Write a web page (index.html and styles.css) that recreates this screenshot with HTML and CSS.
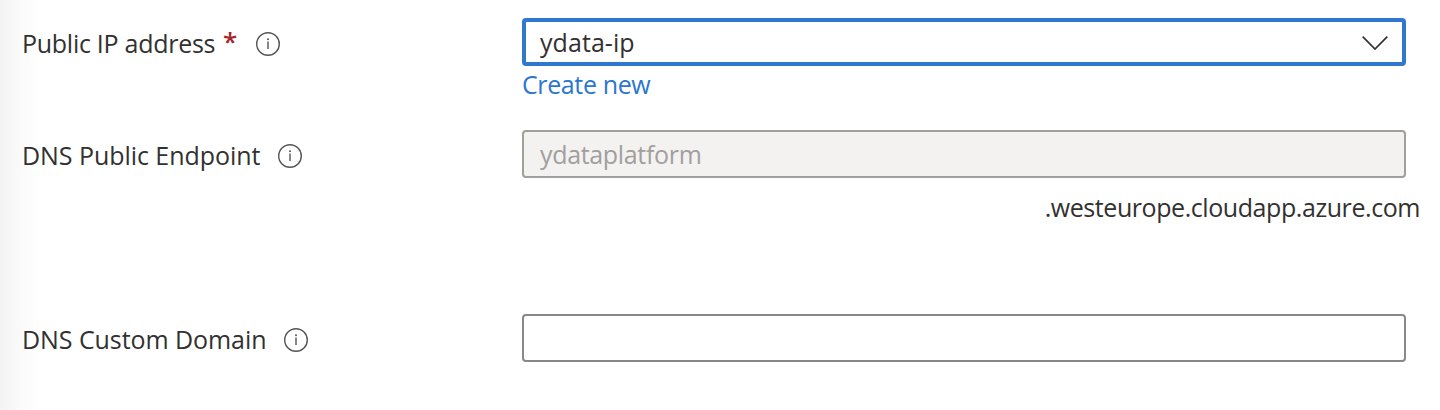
FILE: index.html
```html
<!DOCTYPE html>
<html lang="en">
<head>
<meta charset="utf-8">
<title>Networking</title>
<link rel="stylesheet" href="styles.css">
</head>
<body>
<svg class="defs" width="0" height="0"><symbol id="info" viewBox="0 0 24 24"><circle cx="12" cy="12" r="11.3" fill="none" stroke="currentColor" stroke-width="1.4"/><circle cx="12" cy="7.3" r="1" fill="currentColor"/><path d="M12 9.6v7.4" stroke="currentColor" stroke-width="1.4"/></symbol></svg>
<form class="form">
<div class="row row-ip">
<div class="label"><span class="text t-ip">Public IP address</span><span class="required">*</span><svg class="info"><use href="#info"/></svg></div>
<div class="field">
<div class="box box-select"><span class="text t-value">ydata-ip</span><svg class="chevron" viewBox="0 0 26 14"><path d="M.7.7L13 13 25.3.7" fill="none" stroke="currentColor" stroke-width="1.7"/></svg></div>
<a class="create"><span class="text t-create">Create new</span></a>
</div>
</div>
<div class="row row-endpoint">
<div class="label"><span class="text t-endpoint">DNS Public Endpoint</span><svg class="info"><use href="#info"/></svg></div>
<div class="field">
<div class="box box-disabled"><span class="text t-platform">ydataplatform</span></div>
<div class="suffix"><span class="text t-suffix">.westeurope.cloudapp.azure.com</span></div>
</div>
</div>
<div class="row">
<div class="label"><span class="text t-domain">DNS Custom Domain</span><svg class="info"><use href="#info"/></svg></div>
<div class="field"><div class="box"></div></div>
</div>
</form>
</body>
</html>
```
FILE: styles.css
```css
* { box-sizing: border-box; }
body {
  margin: 0;
  height: 410px;
  overflow: hidden;
  background: linear-gradient(90deg, #f3f3f3 0, #fbfbfb 22px, #fff 42px);
  color: #323130;
  font: 25px/36px "Open Sans", "Noto Sans", sans-serif;
}
.defs { position: absolute; }
.form { padding: 18px 34px 0 22px; }
.row { display: flex; }
.row-ip { height: 112px; }
.row-endpoint { height: 184px; }
.label { display: flex; align-items: center; width: 500px; height: 52px; }
.text { display: inline-block; white-space: nowrap; }
.label .text { margin-top: -3px; }
.t-ip { width: 194px; letter-spacing: -0.27px; }
.t-endpoint { width: 238px; letter-spacing: -0.05px; }
.t-domain { width: 244px; letter-spacing: -0.07px; }
.t-value { letter-spacing: 0.07px; }
.t-create { letter-spacing: -0.38px; }
.t-platform { letter-spacing: -0.33px; }
.t-suffix { letter-spacing: -0.43px; }
.required { width: 22px; padding-left: 7px; margin-top: -7px; color: #a4262c; font-weight: 600; font-size: 26px; }
.info { width: 24px; height: 24px; margin-left: 18px; color: #555453; }
.field { width: 884px; }
.box { display: flex; align-items: center; justify-content: space-between; height: 48px; padding: 0 16px; border: 2px solid #8a8886; border-radius: 4px; background: #fff; }
.box-select { border: 4px solid #3078cd; padding: 0 14px; }
.box-disabled { border-color: #a19f9d; background: #f3f2f1; color: #a19f9d; }
.chevron { width: 26px; height: 14px; margin-top: 2px; }
.create { display: block; color: #2b76ce; }
.suffix { display: flex; justify-content: flex-end; margin: 11px -14px 0 0; }
```
